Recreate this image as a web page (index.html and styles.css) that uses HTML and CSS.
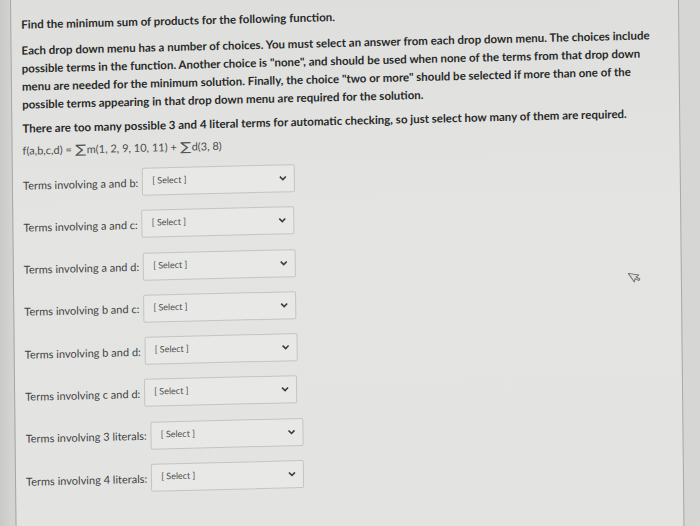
FILE: index.html
```html
<!DOCTYPE html>
<html lang="en">
<head>
<meta charset="utf-8">
<title>Minimum sum of products</title>
<link rel="stylesheet" href="styles.css">
</head>
<body>
<div class="screen">
  <div class="panel">
    <div class="question">
      <p class="lead">Find the minimum sum of products for the following function.</p>
      <p class="lead">Each drop down menu has a number of choices. You must select an answer from each drop down menu. The choices include possible terms in the function. Another choice is "none", and should be used when none of the terms from that drop down menu are needed for the minimum solution. Finally, the choice "two or more" should be selected if more than one of the possible terms appearing in that drop down menu are required for the solution.</p>
      <p class="lead">There are too many possible 3 and 4 literal terms for automatic checking, so just select how many of them are required.</p>
      <p class="func">f(a,b,c,d) = <span class="sigma">∑</span>m(1, 2, 9, 10, 11) + <span class="sigma">∑</span>d(3, 8)</p>

      <div class="row">
        <span class="label">Terms involving a and b:</span>
        <div class="select"><span>[ Select ]</span><svg class="chev" viewBox="0 0 8 6"><path d="M1 1.2 L4 4.2 L7 1.2"/></svg></div>
      </div>
      <div class="row">
        <span class="label">Terms involving a and c:</span>
        <div class="select"><span>[ Select ]</span><svg class="chev" viewBox="0 0 8 6"><path d="M1 1.2 L4 4.2 L7 1.2"/></svg></div>
      </div>
      <div class="row">
        <span class="label">Terms involving a and d:</span>
        <div class="select"><span>[ Select ]</span><svg class="chev" viewBox="0 0 8 6"><path d="M1 1.2 L4 4.2 L7 1.2"/></svg></div>
      </div>
      <div class="row">
        <span class="label">Terms involving b and c:</span>
        <div class="select"><span>[ Select ]</span><svg class="chev" viewBox="0 0 8 6"><path d="M1 1.2 L4 4.2 L7 1.2"/></svg></div>
      </div>
      <div class="row">
        <span class="label">Terms involving b and d:</span>
        <div class="select"><span>[ Select ]</span><svg class="chev" viewBox="0 0 8 6"><path d="M1 1.2 L4 4.2 L7 1.2"/></svg></div>
      </div>
      <div class="row">
        <span class="label">Terms involving c and d:</span>
        <div class="select"><span>[ Select ]</span><svg class="chev" viewBox="0 0 8 6"><path d="M1 1.2 L4 4.2 L7 1.2"/></svg></div>
      </div>
      <div class="row">
        <span class="label">Terms involving 3 literals:</span>
        <div class="select"><span>[ Select ]</span><svg class="chev" viewBox="0 0 8 6"><path d="M1 1.2 L4 4.2 L7 1.2"/></svg></div>
      </div>
      <div class="row">
        <span class="label">Terms involving 4 literals:</span>
        <div class="select"><span>[ Select ]</span><svg class="chev" viewBox="0 0 8 6"><path d="M1 1.2 L4 4.2 L7 1.2"/></svg></div>
      </div>
    </div>
  </div>
  <!-- mouse pointer resting over the page -->
  <svg class="pointer" viewBox="0 0 10 14"><path d="M1 1 L1 11.5 L3.6 9.2 L5.6 13 L7.2 12.2 L5.3 8.5 L8.8 8.3 Z"/></svg>
</div>
</body>
</html>
```

FILE: styles.css
```css
html, body {
  margin: 0;
  padding: 0;
  height: 100%;
  overflow: hidden;
}

body {
  background: #d4d5d3;
  font-family: Lato, "Open Sans", sans-serif;
}

.screen {
  position: relative;
  width: 700px;
  height: 526px;
  background: linear-gradient(90deg, #c9cac8 0, #d3d4d2 11px, #d6d7d5 100%);
  overflow: hidden;
}

/* the question card, seen slightly turned */
.panel {
  margin: 0 0 0 10px;
  width: 667px;
  height: 560px;
  background: linear-gradient(180deg, #dedfdd 0%, #e4e5e3 40%, #e3e4e2 100%);
  border-left: 1px solid #a6a7a5;
  border-right: 1px solid #a9aaa8;
  transform: rotate(-1.4deg) skewX(-0.8deg);
  transform-origin: 0 0;
}

.question {
  padding: 16px 0 0 10px;
  width: 646px;
}

.lead {
  margin: 0 0 6px;
  font-size: 11.5px;
  font-weight: 700;
  line-height: 18px;
  color: #282928;
}

.lead:first-child {
  margin-bottom: 8px;
}

.func {
  margin: -1px 0 12px;
  font-size: 11px;
  line-height: 16px;
  color: #4a4b4a;
}

.sigma {
  display: inline-block;
  font-family: "DejaVu Sans", sans-serif;
  font-size: 12px;
  line-height: 10px;
  color: #555655;
  transform: scaleX(1.35);
  margin: 0 2px 0 2px;
}

.row {
  display: flex;
  align-items: center;
  gap: 4px;
  margin-bottom: 14.3px;
}

.label {
  font-size: 11px;
  color: #414241;
}

.select {
  width: 153px;
  height: 28px;
  box-sizing: border-box;
  display: flex;
  align-items: center;
  justify-content: space-between;
  padding: 0 7px 0 9px;
  background: #e8e9e7;
  border: 1px solid #c4c5c3;
  border-radius: 2px;
  font-size: 9px;
  color: #4e4f4e;
}

.select span {
  margin-top: -3px;
}

.chev {
  width: 8px;
  height: 6px;
}

.chev path {
  fill: none;
  stroke: #3b3c3b;
  stroke-width: 1.6;
}

.pointer {
  position: absolute;
  left: 630px;
  top: 269px;
  width: 10px;
  height: 14px;
  transform: rotate(-35deg);
}

.pointer path {
  fill: #dcdcdb;
  stroke: #6f706f;
  stroke-width: 1;
  stroke-linejoin: round;
}
```
